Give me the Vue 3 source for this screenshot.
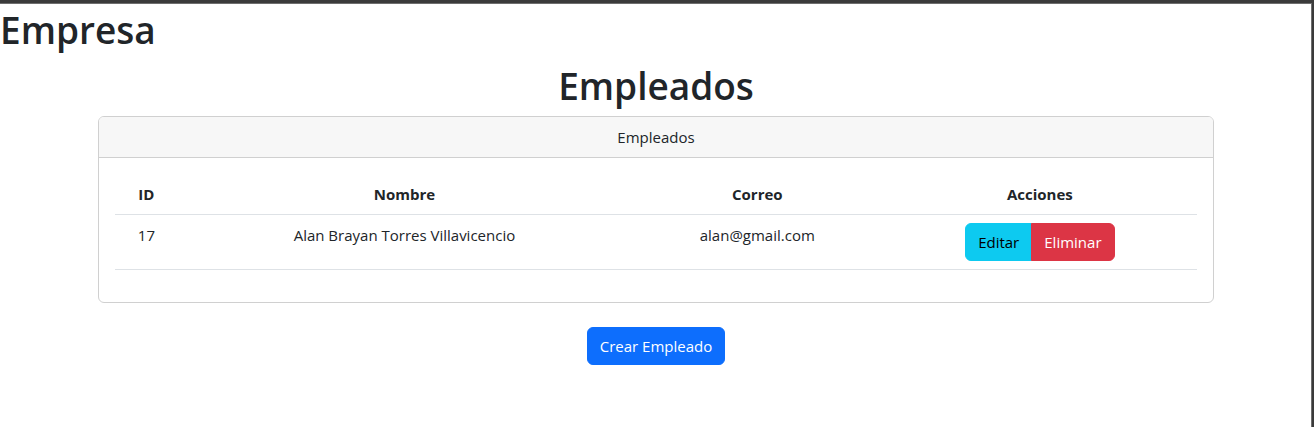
<script setup>
const employees = [
  { id: 17, name: 'Alan Brayan Torres Villavicencio', email: 'alan@gmail.com' },
]
</script>

<template>
  <div class="page">
    <h1>Empresa</h1>
    <main>
      <h1>Empleados</h1>
      <section class="card">
        <header class="card-header">Empleados</header>
        <div class="card-body">
          <table>
            <colgroup>
              <col class="c-id" /><col class="c-name" /><col class="c-mail" /><col class="c-actions" />
            </colgroup>
            <thead>
              <tr>
                <th scope="col">ID</th>
                <th scope="col">Nombre</th>
                <th scope="col">Correo</th>
                <th scope="col">Acciones</th>
              </tr>
            </thead>
            <tbody>
              <tr v-for="e in employees" :key="e.id">
                <td>{{ e.id }}</td>
                <td>{{ e.name }}</td>
                <td>{{ e.email }}</td>
                <td>
                  <div class="btn-group" role="group">
                    <button type="button" class="btn info">Editar</button>
                    <button type="button" class="btn danger">Eliminar</button>
                  </div>
                </td>
              </tr>
            </tbody>
          </table>
        </div>
      </section>
      <button type="button" class="btn primary">Crear Empleado</button>
    </main>
  </div>
</template>

<style>
body {
  background: #fff;
}
</style>

<style scoped>
.page {
  box-sizing: border-box;
  min-height: 100vh;
  padding-top: 1px;
  border-top: 3px solid #3b3b3b;
  border-right: 2px solid #3b3b3b;
  box-shadow: inset -1px 1px 0 #6e6e6e;
  color: #212529;
  font-family: "Segoe UI", "Open Sans", "Noto Sans", sans-serif;
  font-size: 15px;
  line-height: 24px;
}
h1 {
  margin: 0 0 4px;
  font-size: 37px;
  font-weight: 600;
  line-height: 52px;
}
main {
  width: 85%;
  margin: 0 auto;
  text-align: center;
}
.card {
  margin-bottom: 24px;
  border: 1px solid #d0d0d0;
  border-radius: 6px;
  overflow: hidden;
}
.card-header {
  padding: 8px 16px;
  background: #f7f7f7;
  border-bottom: 1px solid #d0d0d0;
}
.card-body {
  padding: 16px 16px 32px;
}
table {
  width: 100%;
  border-collapse: collapse;
  table-layout: fixed;
}
.c-id {
  width: 62px;
}
.c-name {
  width: 42%;
}
.c-mail {
  width: auto;
}
.c-actions {
  width: 29%;
}
th,
td {
  padding: 8px;
  border-bottom: 1px solid #dee2e6;
  vertical-align: top;
}
th {
  font-weight: 700;
}
.btn-group {
  display: inline-flex;
  vertical-align: middle;
}
.btn {
  padding: 6px 12px;
  border: 1px solid transparent;
  border-radius: 6px;
  font: inherit;
  cursor: pointer;
}
.info {
  background: #0dcaf0;
  border-color: #0dcaf0;
  border-radius: 6px 0 0 6px;
  color: #000;
}
.danger {
  margin-left: -1px;
  background: #dc3545;
  border-color: #dc3545;
  border-radius: 0 6px 6px 0;
  color: #fff;
}
.primary {
  background: #0d6efd;
  border-color: #0d6efd;
  color: #fff;
}
</style>
